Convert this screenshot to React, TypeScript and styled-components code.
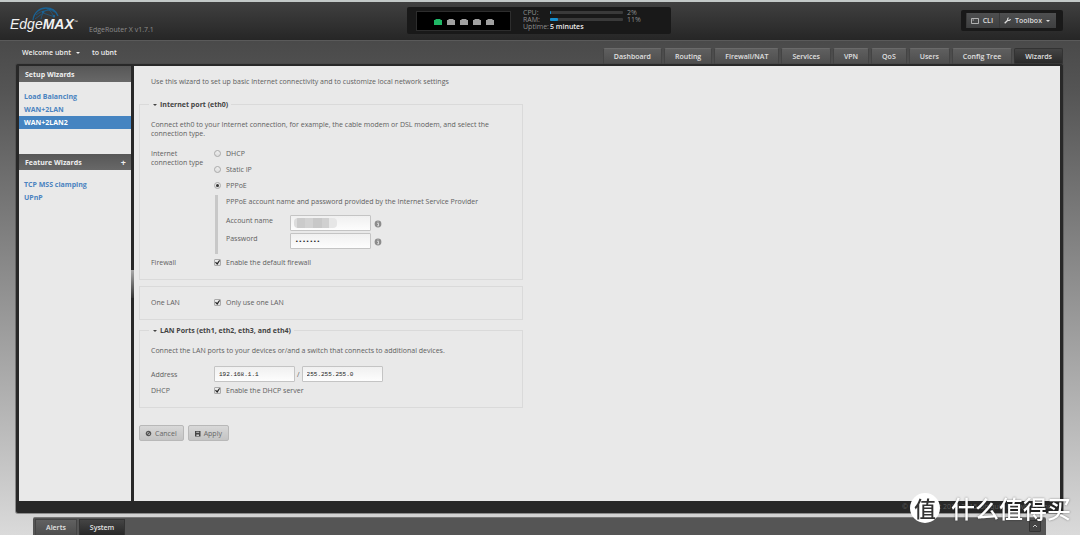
import React from 'react';
import styled, { createGlobalStyle, css } from 'styled-components';

const GlobalStyle = createGlobalStyle`
  * { box-sizing: border-box; }
  body {
    margin: 0;
    font-family: "Open Sans", "Noto Sans", sans-serif;
    font-size: 7px;
    line-height: 9px;
    color: #606060;
  }
  button, input { font: inherit; margin: 0; }
  a { text-decoration: none; }
`;

const Page = styled.div`
  display: flex;
  flex-direction: column;
  min-height: 100vh;
  border-top: 2px solid #c3c9c8;
  background: linear-gradient(#4a4a4a 40px, #555 90px, #dadada 100%);
`;

const Header = styled.header`
  display: grid;
  grid-template-columns: 1fr auto 1fr;
  align-items: start;
  height: 39px;
  padding: 5px 17px 0 15px;
  background: linear-gradient(#404040, #262626);
  border-bottom: 1px solid #5a5a5a;
`;

const Brand = styled.div`
  display: flex;
  align-items: flex-end;
  gap: 11px;
  margin-left: -5px;
`;

const Logo = styled.div`
  position: relative;
  width: 68px;
  height: 27px;
  padding-top: 8px;
  color: #f2f2f2;
  font: italic 14px/19px "Liberation Sans Narrow", "Liberation Sans", sans-serif;
  white-space: nowrap;
  b { font-weight: 700; }
  sup { font-size: 4px; line-height: 4px; vertical-align: 6px; }
`;

const Globe = styled.svg`
  position: absolute;
  left: 21px;
  top: 0;
`;

const Version = styled.span`
  color: #8c8c8c;
`;

const StatusPanel = styled.section`
  display: flex;
  gap: 12px;
  width: 264px;
  height: 27px;
  padding: 4px 9px;
  border-radius: 2px;
  background: #191919;
`;

const Ports = styled.div`
  display: flex;
  align-items: center;
  justify-content: center;
  gap: 5px;
  width: 95px;
  height: 20px;
  border: 1px solid #2d2d2d;
  background: #000;
`;

const Stats = styled.div`
  flex: 1;
  line-height: 7px;
  margin-top: -2px;
  color: #8e8e8e;
`;

const Stat = styled.div`
  display: flex;
  align-items: center;
  height: 7px;
`;

const StatName = styled.span`
  width: 27px;
  white-space: nowrap;
`;

const Meter = styled.div`
  width: 73px;
  height: 3px;
  margin-right: 4px;
  border-radius: 1px;
  background: #3a3a3a;
`;

const MeterFill = styled.div`
  height: 3px;
  border-radius: 1px;
  background: #1590cf;
`;

const Uptime = styled.strong`
  color: #eee;
  font-weight: 600;
`;

const Tools = styled.div`
  display: flex;
  justify-self: end;
  margin-top: 3px;
  padding: 3px 7px 3px 5px;
  border-radius: 2px;
  background: #191919;
`;

const ToolButton = styled.button`
  display: flex;
  align-items: center;
  gap: 4px;
  height: 15px;
  padding: 0 6px 0 4px;
  border: 0;
  border-left: 1px solid #3a3a3a;
  background: linear-gradient(#4e4f50, #3e3f40);
  color: #ddd;
  font-weight: 600;
`;

const Caret = styled.i`
  border: 2px solid transparent;
  border-top-color: currentColor;
  border-bottom: 0;
`;

const NavRow = styled.div`
  display: flex;
  justify-content: space-between;
  height: 23px;
  padding: 0 17px 0 22px;
`;

const Account = styled.div`
  display: flex;
  align-items: center;
  gap: 12px;
  color: #eee;
  font-weight: 600;
`;

const AccountButton = styled.button`
  display: flex;
  align-items: center;
  gap: 5px;
  padding: 0;
  border: 0;
  background: none;
  color: inherit;
`;

const Tabs = styled.nav`
  display: flex;
  align-items: flex-end;
  gap: 2px;
`;

const activeTab = css`
  background: linear-gradient(#444, #282828);
  border-color: #333;
`;

const Tab = styled.a<{ $active?: boolean }>`
  height: 16px;
  padding: 3px 10px;
  border: 1px solid #444;
  border-top-color: #6a6a6a;
  border-bottom: 0;
  border-radius: 2px 2px 0 0;
  background: linear-gradient(#5f5f5f, #4d4d4d);
  color: #e0e0e0;
  font-weight: 600;
  ${(p) => p.$active && activeTab}
`;

const Frame = styled.div`
  flex: 1;
  display: flex;
  flex-direction: column;
  margin: 0 17px 0 16px;
  padding: 2px 3px 0;
  border-radius: 2px;
  background: #282828;
  box-shadow: 0 0 0 1px rgba(70, 70, 70, 0.5);
`;

const Panes = styled.div`
  flex: 1;
  display: flex;
`;

const Sidebar = styled.aside`
  width: 112px;
  background: #e9e9e9;
`;

const Splitter = styled.div`
  display: flex;
  align-items: center;
  width: 3px;
  background: #282828;
`;

const Grip = styled.span`
  width: 3px;
  height: 28px;
  background: linear-gradient(#aaa, #333);
`;

const SideHeader = styled.h2`
  display: flex;
  justify-content: space-between;
  align-items: center;
  height: 16px;
  margin: 0;
  padding: 0 5px 0 6px;
  background: linear-gradient(#575757, #686868);
  color: #f0f0f0;
  font-size: 7px;
  font-weight: 700;
`;

const AddButton = styled.button`
  padding: 0;
  border: 0;
  background: none;
  color: #eee;
  font-size: 9px;
`;

const SideList = styled.ul`
  margin: 0;
  padding: 8px 0 25px;
  list-style: none;
`;

const SideLink = styled.a<{ $active?: boolean }>`
  display: block;
  padding: 2px 5px;
  font-weight: 700;
  color: ${(p) => (p.$active ? '#fff' : '#4a83c0')};
  background: ${(p) => (p.$active ? '#4584c1' : 'none')};
`;

const Content = styled.main`
  flex: 1;
  padding: 11px 5px 0;
  background: #e9e9e9;
`;

const Form = styled.form`
  max-width: 384px;
`;

const Intro = styled.p`
  margin: 0 0 14px;
  padding-left: 12px;
`;

const Group = styled.fieldset`
  min-width: 0;
  margin: 0 0 6px;
  padding: 11px 11px 12px;
  border: 1px solid #dadada;
`;

const Legend = styled.legend`
  margin-left: -2px;
  padding: 0 3px 0 4px;
  color: #444;
  font-weight: 700;
`;

const LegendCaret = styled(Caret)`
  display: inline-block;
  margin-right: 3px;
  vertical-align: middle;
`;

const Note = styled.p<{ $gap?: number }>`
  max-width: 340px;
  margin: 0 0 ${(p) => p.$gap ?? 11}px;
`;

const Row = styled.div`
  display: grid;
  grid-template-columns: 63px 1fr;
  align-items: center;
  & + & { margin-top: 4px; }
`;

const TopRow = styled(Row)`
  align-items: start;
`;

const RowName = styled.span`
  max-width: 56px;
`;

const Choice = styled.label`
  display: flex;
  align-items: center;
  gap: 5px;
`;

const Choices = styled.div`
  display: flex;
  flex-direction: column;
  gap: 7px;
`;

const Tick = styled.input`
  appearance: none;
  display: grid;
  place-items: center;
  width: 7px;
  height: 7px;
  border: 1px solid #aaa;
  background: linear-gradient(#eee, #ddd);
  &[type='radio'] { border-radius: 50%; }
  &[type='radio']:checked::after {
    content: '';
    width: 3px;
    height: 3px;
    border-radius: 50%;
    background: #333;
  }
  &[type='checkbox'] { border-radius: 1px; }
  &[type='checkbox']:checked::after {
    content: '';
    width: 5px;
    height: 5px;
    background: #222;
    clip-path: polygon(0 50%, 20% 35%, 40% 60%, 85% 0, 100% 15%, 45% 100%);
  }
`;

const Details = styled.div`
  margin: 5px 0 0 1px;
  padding: 2px 0 3px 8px;
  border-left: 3px solid #c8c8c8;
`;

const Field = styled.div`
  display: grid;
  grid-template-columns: 64px 81px 1fr;
  align-items: center;
  margin-bottom: 2px;
  label { padding-bottom: 6px; }
`;

const InputBox = styled.div`
  position: relative;
  display: flex;
`;

const TextInput = styled.input`
  width: 81px;
  height: 16px;
  padding: 0 4px;
  border: 1px solid #c4c4c4;
  border-radius: 1px;
  outline: 0;
  background: linear-gradient(#f0f0f0, #fdfdfd);
  color: #222;
  font-family: "Liberation Mono", monospace;
  font-size: 6px;
`;

const Redaction = styled.span`
  position: absolute;
  left: 4px;
  top: 3px;
  width: 43px;
  height: 10px;
  border-radius: 4px;
  background: linear-gradient(90deg, #dcdcdc 0 3px, #cbcbcb 3px 11px, #d2d2d2 11px 19px, #c8c8c8 19px 28px, #d0d0d0 28px 35px, #e6e6e6 35px);
`;

const InfoIcon = styled.svg`
  margin: 2px 0 0 3px;
`;

const AddressPair = styled.div`
  display: flex;
  align-items: center;
  gap: 2px;
`;

const Actions = styled.div`
  display: flex;
  gap: 4px;
  margin-top: 17px;
`;

const ActionButton = styled.button`
  display: flex;
  align-items: center;
  gap: 3px;
  height: 16px;
  padding: 0 6px 0 5px;
  border: 1px solid #b8b8b8;
  border-radius: 2px;
  background: linear-gradient(#d8d8d8, #c4c4c4);
  color: #666;
`;

const Copyright = styled.footer`
  height: 12px;
  padding: 1px 7px;
  color: #5c5c5c;
  text-align: right;
`;

const Dock = styled.div`
  display: flex;
  align-items: flex-end;
  gap: 2px;
  height: 18px;
  margin: 4px 34px 0 33px;
  padding: 0 5px 0 2px;
  border-top: 1px solid #777;
  border-radius: 2px 2px 0 0;
  background: #555;
`;

const DockTab = styled.button<{ $active?: boolean }>`
  height: 16px;
  padding: 0 10px;
  border: 1px solid #444;
  border-bottom: 0;
  background: linear-gradient(#616161, #4d4d4d);
  color: #e4e4e4;
  font-weight: 600;
  ${(p) => p.$active && activeTab}
`;

const DockToggle = styled.button`
  display: grid;
  place-items: center;
  width: 12px;
  height: 12px;
  margin: 0 0 3px auto;
  padding: 0;
  border: 1px solid #333;
  border-radius: 1px;
  background: #444;
`;

const Watermark = styled.div`
  position: fixed;
  right: 9px;
  bottom: 12px;
  display: flex;
  align-items: center;
  gap: 11px;
  color: #fff;
  font: 500 24px/30px "Noto Sans CJK SC", sans-serif;
  text-shadow: 0 0 2px rgba(0, 0, 0, 0.5);
`;

const Badge = styled.span`
  width: 30px;
  height: 30px;
  border-radius: 50%;
  background: #fff;
  color: #333;
  font-size: 22px;
  line-height: 29px;
  text-align: center;
  text-shadow: none;
`;

const tabs = ['Dashboard', 'Routing', 'Firewall/NAT', 'Services', 'VPN', 'QoS', 'Users', 'Config Tree', 'Wizards'];
const setup = ['Load Balancing', 'WAN+2LAN', 'WAN+2LAN2'];
const features = ['TCP MSS clamping', 'UPnP'];
const meters = [
  { name: 'CPU:', value: 2 },
  { name: 'RAM:', value: 11 },
];

const Port = ({ up }: { up: boolean }) => (
  <svg width="8" height="7" viewBox="0 0 8 7">
    <path d="M0 2h1.500V1h5v1H8v5H0z" fill={up ? '#1fb765' : '#a0a0a0'} />
  </svg>
);

const Info = () => (
  <InfoIcon width="8" height="8" viewBox="0 0 8 8" aria-label="Info">
    <circle cx="4" cy="4" r="3.4" fill="#8c8c8c" />
    <path d="M3.2 3.4h1.3v2.2M3.1 5.8h2M3.5 2h1" stroke="#eee" strokeWidth=".8" fill="none" />
  </InfoIcon>
);

export default function App() {
  return (
    <Page>
      <GlobalStyle />
      <Header>
        <Brand>
          <Logo>
            <Globe width="34" height="16" viewBox="0 0 34 16" fill="none" stroke="#1a6294">
              <path d="M2 13C3 5 9 1 15 1c6 0 10 3 12 8" strokeWidth="1.3" />
              <path d="M5 8c6-5 14-6 19-3M10 12C11 6 14 3 19 2M15 1c5 3 7 6 8 10M4 12l8-6 12 4" strokeWidth=".7" />
              <path d="M11 5h2M18 2h2M22 9h2" strokeWidth="1.8" />
            </Globe>
            Edge<b>MAX</b><sup>™</sup>
          </Logo>
          <Version>EdgeRouter X v1.7.1</Version>
        </Brand>
        <StatusPanel>
          <Ports>
            {[0, 1, 2, 3, 4].map((n) => <Port key={n} up={n === 0} />)}
          </Ports>
          <Stats>
            {meters.map((m) => (
              <Stat key={m.name}>
                <StatName>{m.name}</StatName>
                <Meter><MeterFill style={{ width: `${m.value}%` }} /></Meter>
                {m.value}%
              </Stat>
            ))}
            <Stat><StatName>Uptime:</StatName><Uptime>5 minutes</Uptime></Stat>
          </Stats>
        </StatusPanel>
        <Tools>
          <ToolButton>
            <svg width="8" height="6" viewBox="0 0 8 6" fill="none" stroke="#ccc" strokeWidth=".8">
              <path d="M.5.5h7v5h-7zM1.5 2h1.5" />
            </svg>
            CLI
          </ToolButton>
          <ToolButton>
            <svg width="7" height="7" viewBox="0 0 7 7" fill="none" stroke="#ddd">
              <path d="M.7 6.3L4 3" strokeWidth="1.3" />
              <path d="M4.6.8C3.4 1.3 3.3 3 4.2 3.4 5.2 3.8 6.3 3 6.3 2" strokeWidth="1.2" />
            </svg>
            Toolbox
            <Caret />
          </ToolButton>
        </Tools>
      </Header>

      <NavRow>
        <Account>
          <AccountButton>Welcome ubnt <Caret /></AccountButton>
          <span>to ubnt</span>
        </Account>
        <Tabs>
          {tabs.map((t) => <Tab key={t} href="#" $active={t === 'Wizards'}>{t}</Tab>)}
        </Tabs>
      </NavRow>

      <Frame>
        <Panes>
          <Sidebar>
            <SideHeader>Setup Wizards</SideHeader>
            <SideList>
              {setup.map((s) => <li key={s}><SideLink href="#" $active={s === 'WAN+2LAN2'}>{s}</SideLink></li>)}
            </SideList>
            <SideHeader>Feature Wizards <AddButton aria-label="Add wizard">+</AddButton></SideHeader>
            <SideList>
              {features.map((s) => <li key={s}><SideLink href="#">{s}</SideLink></li>)}
            </SideList>
          </Sidebar>
          <Splitter><Grip /></Splitter>
          <Content>
            <Form>
              <Intro>Use this wizard to set up basic Internet connectivity and to customize local network settings</Intro>
              <Group>
                <Legend><LegendCaret />Internet port (eth0)</Legend>
                <Note>Connect eth0 to your Internet connection, for example, the cable modem or DSL modem, and select the connection type.</Note>
                <TopRow>
                  <RowName>Internet connection type</RowName>
                  <div>
                    <Choices>
                      <Choice><Tick type="radio" name="type" />DHCP</Choice>
                      <Choice><Tick type="radio" name="type" />Static IP</Choice>
                      <Choice><Tick type="radio" name="type" defaultChecked />PPPoE</Choice>
                    </Choices>
                    <Details>
                      <Note $gap={9}>PPPoE account name and password provided by the Internet Service Provider</Note>
                      <Field>
                        <label htmlFor="account">Account name</label>
                        <InputBox><TextInput id="account" /><Redaction /></InputBox>
                        <Info />
                      </Field>
                      <Field>
                        <label htmlFor="password">Password</label>
                        <TextInput id="password" type="password" defaultValue="1234567" />
                        <Info />
                      </Field>
                    </Details>
                  </div>
                </TopRow>
                <Row>
                  <span>Firewall</span>
                  <Choice><Tick type="checkbox" defaultChecked />Enable the default firewall</Choice>
                </Row>
              </Group>
              <Group>
                <Row>
                  <span>One LAN</span>
                  <Choice><Tick type="checkbox" defaultChecked />Only use one LAN</Choice>
                </Row>
              </Group>
              <Group>
                <Legend><LegendCaret />LAN Ports (eth1, eth2, eth3, and eth4)</Legend>
                <Note>Connect the LAN ports to your devices or/and a switch that connects to additional devices.</Note>
                <Row>
                  <label htmlFor="address">Address</label>
                  <AddressPair>
                    <TextInput id="address" defaultValue="192.168.1.1" />
                    /
                    <TextInput aria-label="Netmask" defaultValue="255.255.255.0" />
                  </AddressPair>
                </Row>
                <Row>
                  <span>DHCP</span>
                  <Choice><Tick type="checkbox" defaultChecked />Enable the DHCP server</Choice>
                </Row>
              </Group>
              <Actions>
                <ActionButton type="button">
                  <svg width="7" height="7" viewBox="0 0 7 7" fill="none" stroke="#555" strokeWidth="1.2">
                    <circle cx="3.5" cy="3.5" r="2.2" />
                    <path d="M2 5l3-3" />
                  </svg>
                  Cancel
                </ActionButton>
                <ActionButton type="button">
                  <svg width="7" height="7" viewBox="0 0 7 7">
                    <path d="M1 1h5.5v5.5H1z" fill="#444" />
                    <path d="M2.2 1.7h3v1h-3zM2.4 4.5h2.6v1.5H2.4z" fill="#ccc" />
                  </svg>
                  Apply
                </ActionButton>
              </Actions>
            </Form>
          </Content>
        </Panes>
        <Copyright>© Copyright 2012-2015 Ubiquiti Networks, Inc.</Copyright>
      </Frame>

      <Dock>
        <DockTab>Alerts</DockTab>
        <DockTab $active>System</DockTab>
        <DockToggle aria-label="Expand">
          <svg width="6" height="4" viewBox="0 0 6 4"><path d="M1 3l2-2 2 2" fill="none" stroke="#ccc" /></svg>
        </DockToggle>
      </Dock>

      <Watermark><Badge>值</Badge>什么值得买</Watermark>
    </Page>
  );
}
